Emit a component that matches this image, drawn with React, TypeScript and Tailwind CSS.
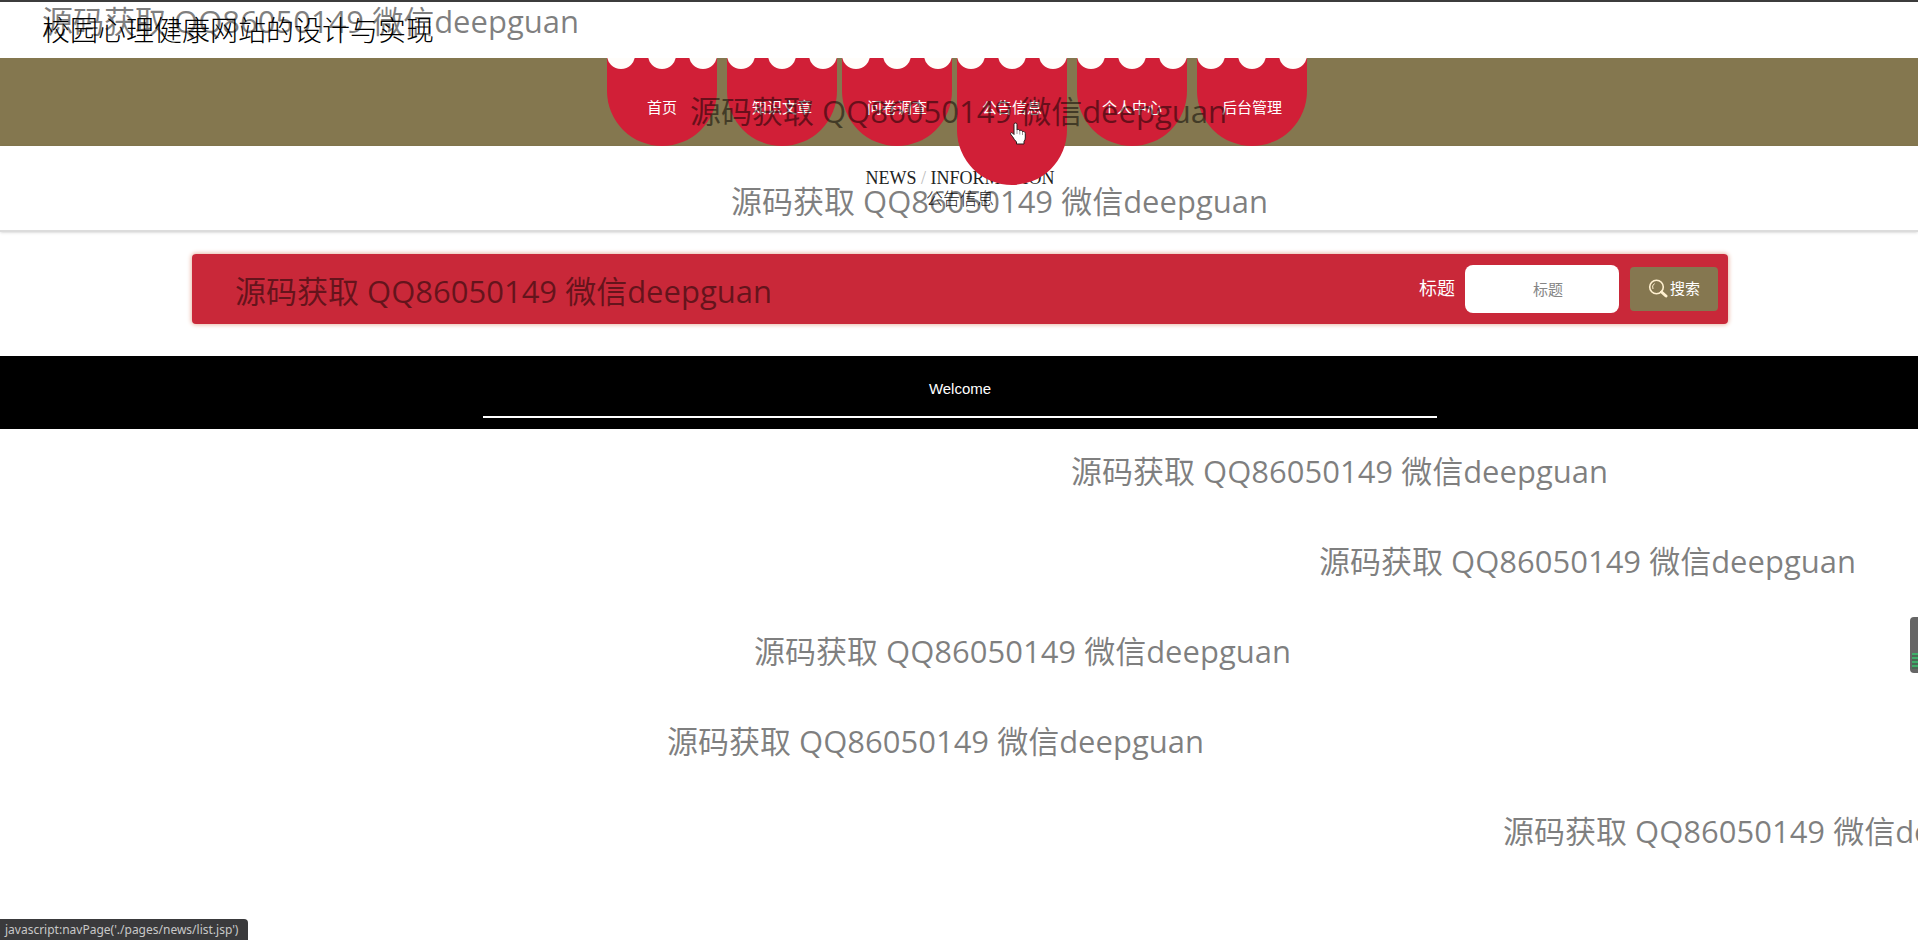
import React from "react";

const tabs = [
  { label: "首页", href: "#home", gap: "" },
  { label: "知识文章", href: "#articles", gap: "ml-[10px]" },
  { label: "问卷调查", href: "#survey", gap: "ml-[5px]" },
  { label: "公告信息", href: "#news", gap: "ml-[5px]", active: true },
  { label: "个人中心", href: "#profile", gap: "ml-[10px]" },
  { label: "后台管理", href: "#admin", gap: "ml-[10px]" },
];

const marks = [
  "left-[42px] top-0",
  "left-[690px] top-[90px]",
  "left-[731px] top-[180px]",
  "left-[235px] top-[270px]",
  "left-[1071px] top-[450px]",
  "left-[1319px] top-[540px]",
  "left-[754px] top-[630px]",
  "left-[667px] top-[720px]",
  "left-[1503px] top-[810px]",
];

function Scallops() {
  return (
    <svg className="absolute left-0 top-0 h-3 w-full" viewBox="0 0 110 12" aria-hidden="true">
      <g fill="#fffdfa">
        <circle cx="14" cy="-3" r="14" />
        <circle cx="55" cy="-3" r="14" />
        <circle cx="96" cy="-3" r="14" />
      </g>
    </svg>
  );
}

function Tab({ label, href, gap, active }: { label: string; href: string; gap: string; active?: boolean }) {
  return (
    <a
      href={href}
      className={`relative block w-[110px] overflow-hidden rounded-b-[55px] bg-[#d11f37] pt-[38px] text-center text-[15px] leading-6 text-white ${gap} ${active ? "z-10 h-[127px]" : "h-[88px]"}`}
    >
      <Scallops />
      {label}
    </a>
  );
}

function HandCursor() {
  return (
    <svg
      className="pointer-events-none absolute left-[1009px] top-[122px] z-30 h-6 w-5"
      viewBox="0 0 20 24"
      aria-hidden="true"
    >
      <path
        d="M5 2.5 Q5 1 6.500 1 Q8 1 8 2.500 V8 Q8.500 7.200 9.700 7.500 Q10.700 7.800 10.800 8.800 Q11.500 8 12.500 8.400 Q13.500 8.800 13.500 9.800 Q14.500 9.200 15.400 9.800 Q16.300 10.400 16.300 11.500 V16 Q16.300 18 15 19.500 V22 H7.500 V20 Q5 17.500 3.500 14.500 Q1.500 12.500 1.500 11.500 Q2 10 3.500 11 L5 12.500 Z"
        fill="#fff"
        stroke="#2a1a1c"
        strokeWidth="1"
        strokeLinejoin="round"
      />
      <path d="M8 8v4M10.800 9v3.500M13.500 10v3" stroke="#77666a" strokeWidth="0.7" />
    </svg>
  );
}

export default function App() {
  return (
    <div className="relative min-h-screen overflow-hidden bg-white font-['Liberation_Sans','Noto_Sans_CJK_SC',sans-serif]">
      <header>
        <div className="h-[58px] border-t-2 border-[#3c3c3c] pl-[42px] pt-[10px]">
          <h1 className="text-[28px] font-light leading-10 text-black">校园心理健康网站的设计与实现</h1>
        </div>
        <nav className="flex h-[88px] items-start justify-center bg-[#84774f] pr-1">
          {tabs.map((t) => (
            <Tab key={t.label} {...t} />
          ))}
        </nav>
      </header>

      <main>
        <section className="h-[86px] border-b-2 border-[#dcdcdc] pl-[2px] pt-[22px] text-center text-[#222] shadow-sm">
          <p className="font-['Liberation_Serif',serif] text-[18px] leading-5">
            NEWS <span className="text-[#bbb]">/</span> INFORMATION
          </p>
          <h2 className="text-[17px] font-light leading-6">公告信息</h2>
        </section>

        <form
          className="ml-[192px] mr-[190px] mt-[22px] flex h-[70px] items-center justify-end rounded bg-[#c92839] pr-[10px] shadow-[0_0_4px_1px_#e9b9a8]"
          onSubmit={(e) => e.preventDefault()}
        >
          <label htmlFor="title" className="mr-[10px] text-[18px] text-white">
            标题
          </label>
          <input
            id="title"
            type="text"
            placeholder="标题"
            className="mr-[11px] h-12 w-[154px] rounded-lg bg-white pl-6 pr-3 text-center text-[15px] text-[#333] outline-none placeholder:text-[#858585]"
          />
          <button type="submit" className="flex h-11 w-[88px] items-center justify-center gap-[2px] rounded bg-[#857750] text-[15px] text-white">
            <svg className="h-5 w-5" viewBox="0 0 20 20" fill="none" stroke="#fff0cf" aria-hidden="true">
              <circle cx="8.500" cy="8" r="6.800" strokeWidth="1.600" />
              <path d="M5 10A4.500 4.500 0 0 1 6.500 4.500" strokeWidth="1" />
              <path d="M13.500 13l4.500 4" strokeWidth="3" strokeLinecap="round" />
            </svg>
            搜索
          </button>
        </form>

        <div className="mt-8 flex h-[73px] flex-col items-center bg-black pl-[2px] pt-[21px] text-white">
          <p className="text-[15px] leading-6">Welcome</p>
          <div className="mt-[15px] h-[2px] w-full max-w-[954px] bg-white" />
        </div>
      </main>

      <div className="pointer-events-none absolute inset-0 z-20 overflow-hidden" aria-hidden="true">
        {marks.map((m) => (
          <span
            key={m}
            className={`absolute whitespace-nowrap font-['Open_Sans','Noto_Sans_CJK_SC',sans-serif] text-[31px] leading-[42px] text-black/50 ${m}`}
          >
            源码获取 QQ86050149 微信deepguan
          </span>
        ))}
      </div>

      <HandCursor />

      <div className="absolute right-0 top-[617px] flex h-14 w-2 flex-col justify-end rounded-l bg-[#666] pb-1 pl-[2px]">
        <div className="h-4 bg-[repeating-linear-gradient(#3fae6a_0_2px,#4b6b56_2px_4px)]" />
      </div>

      <div className="absolute bottom-0 left-0 h-[21px] w-[248px] rounded-tr bg-[#3a3a3c] pl-[5px] pt-px font-['Noto_Sans',sans-serif] text-[12px] leading-5 text-[#c8c8c8]">
        javascript:navPage('./pages/news/list.jsp')
      </div>
    </div>
  );
}
